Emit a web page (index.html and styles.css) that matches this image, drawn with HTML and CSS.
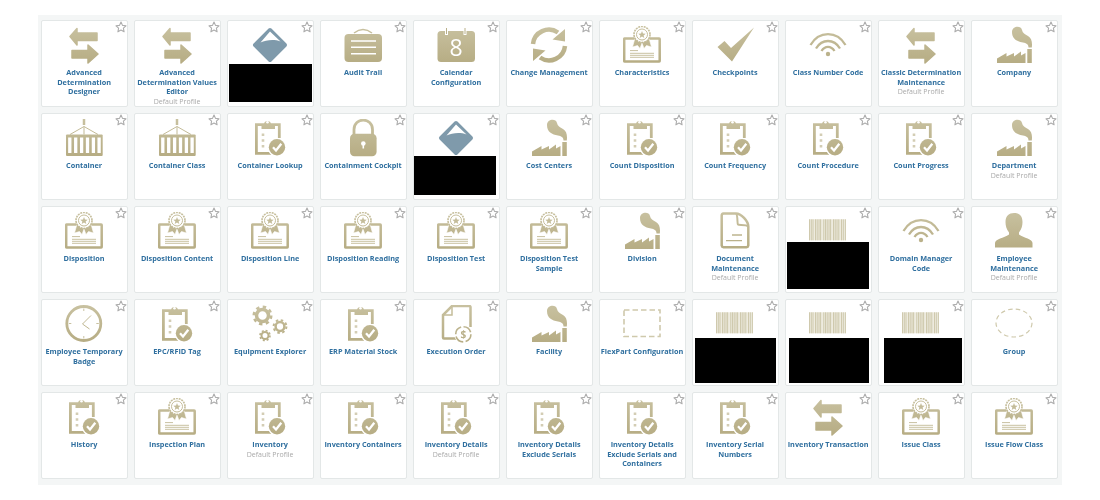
FILE: index.html
```html
<!DOCTYPE html>
<html lang="en">
<head>
    <meta charset="UTF-8">
    <title>Applications</title>
    <link rel="stylesheet" href="styles.css">
</head>
<body>
    <svg class="sprite" width="0" height="0">
        <defs>
            <linearGradient id="gold" gradientUnits="userSpaceOnUse" x1="0" y1="0" x2="0" y2="38">
                <stop offset="0" stop-color="#c8c1a0"/>
                <stop offset="1" stop-color="#b6ac83"/>
            </linearGradient>
        </defs>
        <symbol id="i-star" viewBox="0 0 12 12">
            <path d="M6 1 7.500 4.400 11 4.800 8.400 7.200 9.100 10.800 6 9 2.900 10.800 3.600 7.200 1 4.800 4.500 4.400Z" fill="#fff" stroke="#adadad" stroke-width="1.100" stroke-linejoin="round"/>
        </symbol>
        <symbol id="i-arrows" viewBox="0 0 38 38">
            <path d="M5 10.500 12 2.500V7H32V14.500H12V19Z M7 24.500H23V19L33 28 23 37V32H7Z" fill="url(#gold)" stroke="url(#gold)" stroke-width="1.500" stroke-linejoin="round"/>
        </symbol>
        <symbol id="i-diamond" viewBox="0 0 38 38">
            <path d="M19 4 34 19 19 34 4 19Z" fill="#7f9aab" stroke="#7f9aab" stroke-width="4" stroke-linejoin="round"/>
            <path d="M19 5.500 29.500 15.500C23 13 15 14 9.500 16.500Z" fill="#fff"/>
        </symbol>
        <symbol id="i-case" viewBox="0 0 38 38">
            <path d="M10 7Q19 0 28 7" fill="none" stroke="url(#gold)" stroke-width="1.500"/>
            <rect x=".5" y="8" width="37.500" height="28" rx="4" fill="url(#gold)"/>
            <path d="M7 15H32M7 21.300H32M7 27.700H32" stroke="#fff" stroke-width="1.500"/>
        </symbol>
        <symbol id="i-calendar" viewBox="0 0 38 38">
            <rect x=".5" y="5" width="37.500" height="31" rx="3.500" fill="url(#gold)"/>
            <path d="M9.500 2V9M28 2V9" stroke="#fff" stroke-width="3"/>
            <path d="M9.500 2V8M28 2V8" stroke="#b9b08a" stroke-width="1"/>
        </symbol>
        <symbol id="i-change" viewBox="0 0 38 38">
            <g fill="none" stroke="url(#gold)" stroke-width="4.500">
                <path d="M3 18A16 16 0 0 1 28 6.500"/>
                <path d="M35 20A16 16 0 0 1 10 31.500"/>
            </g>
            <path d="M35 3 35 15.500 22.500 13.500Z M3 35 3 22.500 15.500 24.500Z" fill="url(#gold)"/>
        </symbol>
        <symbol id="i-cert" viewBox="0 0 38 38">
            <rect x="1.200" y="12.500" width="35.500" height="23" fill="#fff" stroke="url(#gold)" stroke-width="2.500" rx=".5"/>
            <path d="M7 24.600H15M7 27.300H31M7 29.300H31M7 31.300H31" stroke="#c8c1a0" stroke-width="1"/>
            <path d="M12 12 9.500 21 14.500 19.500 17 22.500 19 17 21 22.500 23.500 19.500 28.500 21 26 12Z" fill="url(#gold)" stroke="#fff" stroke-width=".6"/>
            <circle cx="19" cy="8.500" r="8" fill="#fff" stroke="url(#gold)" stroke-width="1.600" stroke-dasharray="2 .8"/>
            <circle cx="19" cy="8.500" r="5.500" fill="#fff" stroke="url(#gold)" stroke-width="1"/>
            <path d="M19 5 20 7.600 22.700 7.700 20.600 9.400 21.300 12 19 10.500 16.700 12 17.400 9.400 15.300 7.700 18 7.600Z" fill="url(#gold)"/>
        </symbol>
        <symbol id="i-check" viewBox="0 0 38 38">
            <path d="M1.500 21 8.500 15 15 22 38 1.500 16 35.500Z" fill="url(#gold)"/>
        </symbol>
        <symbol id="i-wifi" viewBox="0 0 38 38">
            <g fill="none" stroke="url(#gold)" stroke-width="2.300">
                <path d="M1.500 19C10 4.500 28 4.500 36.500 19"/>
                <path d="M7 22.500C13 12.500 25 12.500 31 22.500"/>
                <path d="M12.500 25C16 19.500 22 19.500 25.500 25"/>
            </g>
            <circle cx="19" cy="28" r="2.200" fill="url(#gold)"/>
        </symbol>
        <symbol id="i-factory" viewBox="0 0 38 38">
            <path d="M17 6C17 0 26 -1 27 4 27.500 7 30 8.500 33 10 36.500 12 37.500 16 36.800 21.500H33.500C33.500 18 31 17 28 16.500 22 15.500 17 13 17 6Z" fill="url(#gold)"/>
            <path d="M2 37V32.500L11.500 27V30.500L19 27V30.500L26 25.500V29.500L30.500 27V37Z M32.300 23H36.800V37H32.300Z" fill="url(#gold)"/>
        </symbol>
        <symbol id="i-container" viewBox="0 0 38 38">
            <path d="M19 0V6" stroke="url(#gold)" stroke-width="2.500"/>
            <path d="M19 7.500 5 15.500M19 7.500 33 15.500M19 7.500V15.500" stroke="url(#gold)" stroke-width="1" fill="none"/>
            <rect x="1" y="15.500" width="36.700" height="21.500" rx="1" fill="url(#gold)"/>
            <path d="M4.800 18.500V34M10.700 18.500V34M16.600 18.500V34M22.500 18.500V34M28.400 18.500V34M34.100 18.500V34" stroke="#fff" stroke-width="3.300"/>
        </symbol>
        <symbol id="i-clip" viewBox="0 0 38 38">
            <path d="M20 34.300H5.400V5.600H28.300V19" fill="none" stroke="url(#gold)" stroke-width="2.800"/>
            <path d="M10.500 5.500H13A3.500 3.500 0 0 1 20 5.500H24V10H10.500Z" fill="url(#gold)"/>
            <circle cx="16.500" cy="3.300" r="1.300" fill="#fff"/>
            <path d="M10.700 14.500H13.300V17H10.700Z M10.700 20.300H13.300V22.800H10.700Z M10.700 26H13.300V28.500H10.700Z" fill="#d3cdb4"/>
            <circle cx="26" cy="28.300" r="9.500" fill="#fff"/>
            <circle cx="26" cy="28.300" r="8.200" fill="url(#gold)"/>
            <path d="M22 28.300 25 31.500 30.300 24.800" fill="none" stroke="#fff" stroke-width="2.300"/>
        </symbol>
        <symbol id="i-lock" viewBox="0 0 38 38">
            <path d="M10 16V10.500C10 -2 28.500 -2 28.500 10.500V16" fill="none" stroke="url(#gold)" stroke-width="2.800"/>
            <rect x="6" y="14.700" width="26.600" height="22.600" rx="4.500" fill="url(#gold)"/>
            <circle cx="19.300" cy="24.500" r="2.300" fill="#fff"/>
            <path d="M19.300 25V29.500" stroke="#fff" stroke-width="1.600"/>
        </symbol>
        <symbol id="i-clock" viewBox="0 0 38 38">
            <circle cx="18.800" cy="18.500" r="17" fill="none" stroke="url(#gold)" stroke-width="2.800"/>
            <path d="M26 10.500 17.500 19 24.500 24" fill="none" stroke="url(#gold)" stroke-width="1"/>
            <path d="M18.800 3.500V6M18.800 31V33.500M3.800 18.500H6.300M31.300 18.500H33.800" stroke="#c8c1a0" stroke-width="1"/>
        </symbol>
        <symbol id="i-gears" viewBox="0 0 38 38">
            <g fill="none" stroke="url(#gold)">
                <circle cx="11.500" cy="10.500" r="6" stroke-width="3.500"/>
                <circle cx="11.500" cy="10.500" r="8.700" stroke-width="2.600" stroke-dasharray="3.400 3.430"/>
                <circle cx="29" cy="21.500" r="4.400" stroke-width="2.500"/>
                <circle cx="29" cy="21.500" r="6.400" stroke-width="2" stroke-dasharray="2.500 2.525"/>
                <circle cx="14" cy="30.500" r="3.500" stroke-width="2"/>
                <circle cx="14" cy="30.500" r="5" stroke-width="1.600" stroke-dasharray="2 1.930"/>
            </g>
        </symbol>
        <symbol id="i-doc" viewBox="0 0 38 38">
            <path d="M20 1.500H7.500A2 2 0 0 0 5.700 3.500V33.500A2 2 0 0 0 7.500 35.200H30.500A2 2 0 0 0 32.300 33.500V14.500C32.300 9 25 1.500 20 1.500Z" fill="none" stroke="url(#gold)" stroke-width="2.500"/>
            <path d="M20 1.500C22 3 21 11.500 22 12.500 23 13.500 30 12 32.300 14.500" fill="none" stroke="url(#gold)" stroke-width="2"/>
            <path d="M16 23H26M10 28.700H26" stroke="url(#gold)" stroke-width="1.300"/>
        </symbol>
        <symbol id="i-order" viewBox="0 0 38 38">
            <path d="M33.500 22V2A1 1 0 0 0 32.500 1H15L6 10V32.500A1 1 0 0 0 7 33.500H19" fill="none" stroke="url(#gold)" stroke-width="2.500"/>
            <path d="M15 1V10H6" fill="none" stroke="url(#gold)" stroke-width="1.500"/>
            <circle cx="26.300" cy="29.300" r="9" fill="#fff"/>
            <circle cx="26.300" cy="29.300" r="7.600" fill="none" stroke="url(#gold)" stroke-width="1.600" stroke-dasharray="9.500 2.440"/>
        </symbol>
        <symbol id="i-person" viewBox="0 0 38 38">
            <path d="M0 35.500V31C0 27 9 26 14 22.500V20.500C11.500 17 10.500 14 10.500 10 10.500 4 14 1 19 1 24.500 1 27.500 4 27.500 10 27.500 14 26.500 17 24 20.500V22.500C29 26 37.500 27 37.500 31V35.500Z" fill="url(#gold)"/>
        </symbol>
        <symbol id="i-barcode" viewBox="0 0 38 38">
            <rect x="0" y="7.300" width="37" height="21" fill="#eeebdf"/>
            <path d="M.5 7.300V28.300M2.300 7.300V28.300M4 7.300V28.300M6.500 7.300V28.300M8.200 7.300V28.300M10 7.300V28.300M11.600 7.300V28.300M14.800 7.300V28.300M16.500 7.300V28.300M18.200 7.300V28.300M20 7.300V28.300M21.600 7.300V28.300M24.500 7.300V28.300M26.200 7.300V28.300M28 7.300V28.300M29.800 7.300V28.300M32.500 7.300V28.300M34.300 7.300V28.300M36.400 7.300V28.300" stroke="#cbc5a7" stroke-width=".9"/>
        </symbol>
        <symbol id="i-dash" viewBox="0 0 38 38">
            <rect x="1" y="5" width="36" height="26.500" fill="none" stroke="#cfc9ac" stroke-width="1.600" stroke-dasharray="5.500 3"/>
        </symbol>
        <symbol id="i-ring" viewBox="0 0 38 38">
            <ellipse cx="19" cy="18" rx="18" ry="14" fill="none" stroke="#cfc9ac" stroke-width="1.200" stroke-dasharray="4.500 3.200"/>
        </symbol>
    </svg>

    <div class="board">
        <!-- ряд 1 -->
        <a class="tile"><svg class="star"><use href="#i-star"/></svg><svg class="icon"><use href="#i-arrows"/></svg><span class="name">Advanced Determination Designer</span></a>
        <a class="tile"><svg class="star"><use href="#i-star"/></svg><svg class="icon"><use href="#i-arrows"/></svg><span class="name">Advanced Determination Values Editor</span><span class="sub">Default Profile</span></a>
        <a class="tile"><svg class="star"><use href="#i-star"/></svg><svg class="icon"><use href="#i-diamond"/></svg><div class="mask mask-a"></div></a>
        <a class="tile"><svg class="star"><use href="#i-star"/></svg><svg class="icon"><use href="#i-case"/></svg><span class="name">Audit Trail</span></a>
        <a class="tile"><svg class="star"><use href="#i-star"/></svg><svg class="icon"><use href="#i-calendar"/><text x="19" y="30" class="cal-day">8</text></svg><span class="name">Calendar<br>Configuration</span></a>
        <a class="tile"><svg class="star"><use href="#i-star"/></svg><svg class="icon"><use href="#i-change"/></svg><span class="name">Change Management</span></a>
        <a class="tile"><svg class="star"><use href="#i-star"/></svg><svg class="icon"><use href="#i-cert"/></svg><span class="name">Characteristics</span></a>
        <a class="tile"><svg class="star"><use href="#i-star"/></svg><svg class="icon"><use href="#i-check"/></svg><span class="name">Checkpoints</span></a>
        <a class="tile"><svg class="star"><use href="#i-star"/></svg><svg class="icon"><use href="#i-wifi"/></svg><span class="name">Class Number Code</span></a>
        <a class="tile"><svg class="star"><use href="#i-star"/></svg><svg class="icon"><use href="#i-arrows"/></svg><span class="name">Classic Determination Maintenance</span><span class="sub">Default Profile</span></a>
        <a class="tile"><svg class="star"><use href="#i-star"/></svg><svg class="icon"><use href="#i-factory"/></svg><span class="name">Company</span></a>

        <!-- ряд 2 -->
        <a class="tile"><svg class="star"><use href="#i-star"/></svg><svg class="icon"><use href="#i-container"/></svg><span class="name">Container</span></a>
        <a class="tile"><svg class="star"><use href="#i-star"/></svg><svg class="icon"><use href="#i-container"/></svg><span class="name">Container Class</span></a>
        <a class="tile"><svg class="star"><use href="#i-star"/></svg><svg class="icon"><use href="#i-clip"/></svg><span class="name">Container Lookup</span></a>
        <a class="tile"><svg class="star"><use href="#i-star"/></svg><svg class="icon"><use href="#i-lock"/></svg><span class="name">Containment Cockpit</span></a>
        <a class="tile"><svg class="star"><use href="#i-star"/></svg><svg class="icon"><use href="#i-diamond"/></svg><div class="mask mask-b"></div></a>
        <a class="tile"><svg class="star"><use href="#i-star"/></svg><svg class="icon"><use href="#i-factory"/></svg><span class="name">Cost Centers</span></a>
        <a class="tile"><svg class="star"><use href="#i-star"/></svg><svg class="icon"><use href="#i-clip"/></svg><span class="name">Count Disposition</span></a>
        <a class="tile"><svg class="star"><use href="#i-star"/></svg><svg class="icon"><use href="#i-clip"/></svg><span class="name">Count Frequency</span></a>
        <a class="tile"><svg class="star"><use href="#i-star"/></svg><svg class="icon"><use href="#i-clip"/></svg><span class="name">Count Procedure</span></a>
        <a class="tile"><svg class="star"><use href="#i-star"/></svg><svg class="icon"><use href="#i-clip"/></svg><span class="name">Count Progress</span></a>
        <a class="tile"><svg class="star"><use href="#i-star"/></svg><svg class="icon"><use href="#i-factory"/></svg><span class="name">Department</span><span class="sub">Default Profile</span></a>

        <!-- ряд 3 -->
        <a class="tile"><svg class="star"><use href="#i-star"/></svg><svg class="icon"><use href="#i-cert"/></svg><span class="name">Disposition</span></a>
        <a class="tile"><svg class="star"><use href="#i-star"/></svg><svg class="icon"><use href="#i-cert"/></svg><span class="name">Disposition Content</span></a>
        <a class="tile"><svg class="star"><use href="#i-star"/></svg><svg class="icon"><use href="#i-cert"/></svg><span class="name">Disposition Line</span></a>
        <a class="tile"><svg class="star"><use href="#i-star"/></svg><svg class="icon"><use href="#i-cert"/></svg><span class="name">Disposition Reading</span></a>
        <a class="tile"><svg class="star"><use href="#i-star"/></svg><svg class="icon"><use href="#i-cert"/></svg><span class="name">Disposition Test</span></a>
        <a class="tile"><svg class="star"><use href="#i-star"/></svg><svg class="icon"><use href="#i-cert"/></svg><span class="name">Disposition Test Sample</span></a>
        <a class="tile"><svg class="star"><use href="#i-star"/></svg><svg class="icon"><use href="#i-factory"/></svg><span class="name">Division</span></a>
        <a class="tile"><svg class="star"><use href="#i-star"/></svg><svg class="icon"><use href="#i-doc"/></svg><span class="name">Document<br>Maintenance</span><span class="sub">Default Profile</span></a>
        <a class="tile"><svg class="star"><use href="#i-star"/></svg><svg class="icon"><use href="#i-barcode"/></svg><div class="mask mask-c"></div></a>
        <a class="tile"><svg class="star"><use href="#i-star"/></svg><svg class="icon"><use href="#i-wifi"/></svg><span class="name">Domain Manager<br>Code</span></a>
        <a class="tile"><svg class="star"><use href="#i-star"/></svg><svg class="icon"><use href="#i-person"/></svg><span class="name">Employee<br>Maintenance</span><span class="sub">Default Profile</span></a>

        <!-- ряд 4 -->
        <a class="tile"><svg class="star"><use href="#i-star"/></svg><svg class="icon"><use href="#i-clock"/></svg><span class="name">Employee Temporary Badge</span></a>
        <a class="tile"><svg class="star"><use href="#i-star"/></svg><svg class="icon"><use href="#i-clip"/></svg><span class="name">EPC/RFID Tag</span></a>
        <a class="tile"><svg class="star"><use href="#i-star"/></svg><svg class="icon"><use href="#i-gears"/></svg><span class="name">Equipment Explorer</span></a>
        <a class="tile"><svg class="star"><use href="#i-star"/></svg><svg class="icon"><use href="#i-clip"/></svg><span class="name">ERP Material Stock</span></a>
        <a class="tile"><svg class="star"><use href="#i-star"/></svg><svg class="icon"><use href="#i-order"/><text x="26.300" y="33" class="order-sign">$</text></svg><span class="name">Execution Order</span></a>
        <a class="tile"><svg class="star"><use href="#i-star"/></svg><svg class="icon"><use href="#i-factory"/></svg><span class="name">Facility</span></a>
        <a class="tile"><svg class="star"><use href="#i-star"/></svg><svg class="icon"><use href="#i-dash"/></svg><span class="name">FlexPart Configuration</span></a>
        <a class="tile"><svg class="star"><use href="#i-star"/></svg><svg class="icon"><use href="#i-barcode"/></svg><div class="mask mask-d"></div></a>
        <a class="tile"><svg class="star"><use href="#i-star"/></svg><svg class="icon"><use href="#i-barcode"/></svg><div class="mask mask-e"></div></a>
        <a class="tile"><svg class="star"><use href="#i-star"/></svg><svg class="icon"><use href="#i-barcode"/></svg><div class="mask mask-f"></div></a>
        <a class="tile"><svg class="star"><use href="#i-star"/></svg><svg class="icon"><use href="#i-ring"/></svg><span class="name">Group</span></a>

        <!-- ряд 5 -->
        <a class="tile"><svg class="star"><use href="#i-star"/></svg><svg class="icon"><use href="#i-clip"/></svg><span class="name">History</span></a>
        <a class="tile"><svg class="star"><use href="#i-star"/></svg><svg class="icon"><use href="#i-cert"/></svg><span class="name">Inspection Plan</span></a>
        <a class="tile"><svg class="star"><use href="#i-star"/></svg><svg class="icon"><use href="#i-clip"/></svg><span class="name">Inventory</span><span class="sub">Default Profile</span></a>
        <a class="tile"><svg class="star"><use href="#i-star"/></svg><svg class="icon"><use href="#i-clip"/></svg><span class="name">Inventory Containers</span></a>
        <a class="tile"><svg class="star"><use href="#i-star"/></svg><svg class="icon"><use href="#i-clip"/></svg><span class="name">Inventory Details</span><span class="sub">Default Profile</span></a>
        <a class="tile"><svg class="star"><use href="#i-star"/></svg><svg class="icon"><use href="#i-clip"/></svg><span class="name">Inventory Details<br>Exclude Serials</span></a>
        <a class="tile"><svg class="star"><use href="#i-star"/></svg><svg class="icon"><use href="#i-clip"/></svg><span class="name">Inventory Details<br>Exclude Serials and<br>Containers</span></a>
        <a class="tile"><svg class="star"><use href="#i-star"/></svg><svg class="icon"><use href="#i-clip"/></svg><span class="name">Inventory Serial<br>Numbers</span></a>
        <a class="tile"><svg class="star"><use href="#i-star"/></svg><svg class="icon"><use href="#i-arrows"/></svg><span class="name">Inventory Transaction</span></a>
        <a class="tile"><svg class="star"><use href="#i-star"/></svg><svg class="icon"><use href="#i-cert"/></svg><span class="name">Issue Class</span></a>
        <a class="tile"><svg class="star"><use href="#i-star"/></svg><svg class="icon"><use href="#i-cert"/></svg><span class="name">Issue Flow Class</span></a>
    </div>
</body>
</html>
```

FILE: styles.css
```css
* {
    margin: 0;
    padding: 0;
    box-sizing: border-box;
}

body {
    background: #fff;
    font-family: 'Open Sans', 'Noto Sans', sans-serif;
}

.sprite {
    position: absolute;
}

.board {
    display: grid;
    grid-template-columns: repeat(11, 87px);
    grid-auto-rows: 87px;
    gap: 6px;
    width: 1024px;
    height: 470px;
    margin: 15px 38px;
    padding: 5px 3px 6px 2.600px;
    background: #f4f6f6;
    filter: blur(0.4px);
}

.tile {
    position: relative;
    display: flex;
    flex-direction: column;
    align-items: center;
    padding-top: 5px;
    background: #fff;
    border: 1px solid #e3e7e7;
    border-radius: 2px;
    text-align: center;
}

.icon {
    flex: none;
    width: 38px;
    height: 38px;
    margin-bottom: 4px;
}

.star {
    position: absolute;
    top: 0;
    right: 0;
    width: 12px;
    height: 12px;
}

.name {
    font-size: 7.300px;
    font-weight: 700;
    line-height: 9.600px;
    color: #2f6f9f;
}

.sub {
    font-size: 7px;
    line-height: 9.600px;
    color: #a9a9a9;
}

.cal-day {
    font-size: 23px;
    fill: #fff;
    text-anchor: middle;
    font-family: 'Open Sans', sans-serif;
}

.order-sign {
    font-size: 10px;
    font-weight: 700;
    fill: #b9b08a;
    text-anchor: middle;
}

/* чёрные плашки поверх подписей */
.mask {
    position: absolute;
    background: #000;
}

.mask-a {
    left: 1.400px;
    top: 43.300px;
    width: 82.700px;
    height: 38px;
}

.mask-b {
    left: .7px;
    top: 42px;
    width: 81.400px;
    height: 39.300px;
}

.mask-c {
    left: 1.100px;
    top: 35.300px;
    width: 82.600px;
    height: 46.400px;
}

.mask-d {
    left: 2.400px;
    top: 37.500px;
    width: 81px;
    height: 45px;
}

.mask-e {
    left: 3.700px;
    top: 37.500px;
    width: 79.400px;
    height: 45px;
}

.mask-f {
    left: 5.700px;
    top: 37.500px;
    width: 77.400px;
    height: 45px;
}
```
